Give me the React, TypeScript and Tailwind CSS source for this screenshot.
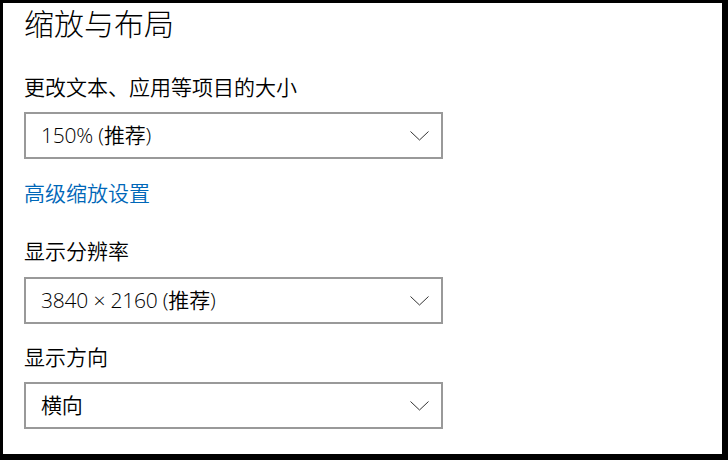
import React from "react";

const font = { fontFamily: '"Open Sans", "Noto Sans CJK SC", sans-serif' };

function Chevron() {
    return (
        <svg width="19" height="10" viewBox="0 0 19 10" className="shrink-0">
            <polyline points="0.5,0.5 9.5,9 18.5,0.5" fill="none" stroke="#333333" strokeWidth="1" />
        </svg>
    );
}

interface DropdownProps {
    value: string;
    className?: string;
}

function Dropdown({ value, className = "" }: DropdownProps) {
    return (
        <div className={`w-[419px] h-[47px] border-2 border-[#999999] bg-white flex items-center justify-between pl-[15px] pr-[12px] ${className}`}>
            <span className="text-[21px] font-[350] text-black leading-none tracking-[-0.2px]">{value}</span>
            <Chevron />
        </div>
    );
}

export default function App() {
    return (
        <div className="w-[728px] h-[460px] bg-black pt-[3px] pl-[3px] pr-[6px] pb-[6px]" style={font}>
            <div className="w-full h-full bg-white pl-[21px] flex flex-col">
                {/* page title */}
                <div className="h-[42px] leading-[42px] text-[30px] font-light text-black">缩放与布局</div>

                <div className="mt-[27px] h-[30px] leading-[30px] text-[21px] font-[350] text-black">更改文本、应用等项目的大小</div>
                <Dropdown value="150% (推荐)" className="mt-[10px]" />

                <div className="mt-[19px] h-[30px] leading-[30px] text-[21px] font-[350] text-[#0067b8]">高级缩放设置</div>

                <div className="mt-[28px] h-[30px] leading-[30px] text-[21px] font-[350] text-black">显示分辨率</div>
                <Dropdown value="3840 × 2160 (推荐)" className="mt-[11px]" />

                <div className="mt-[18px] h-[30px] leading-[30px] text-[21px] font-[350] text-black">显示方向</div>
                <Dropdown value="横向" className="mt-[10px]" />
            </div>
        </div>
    );
}
